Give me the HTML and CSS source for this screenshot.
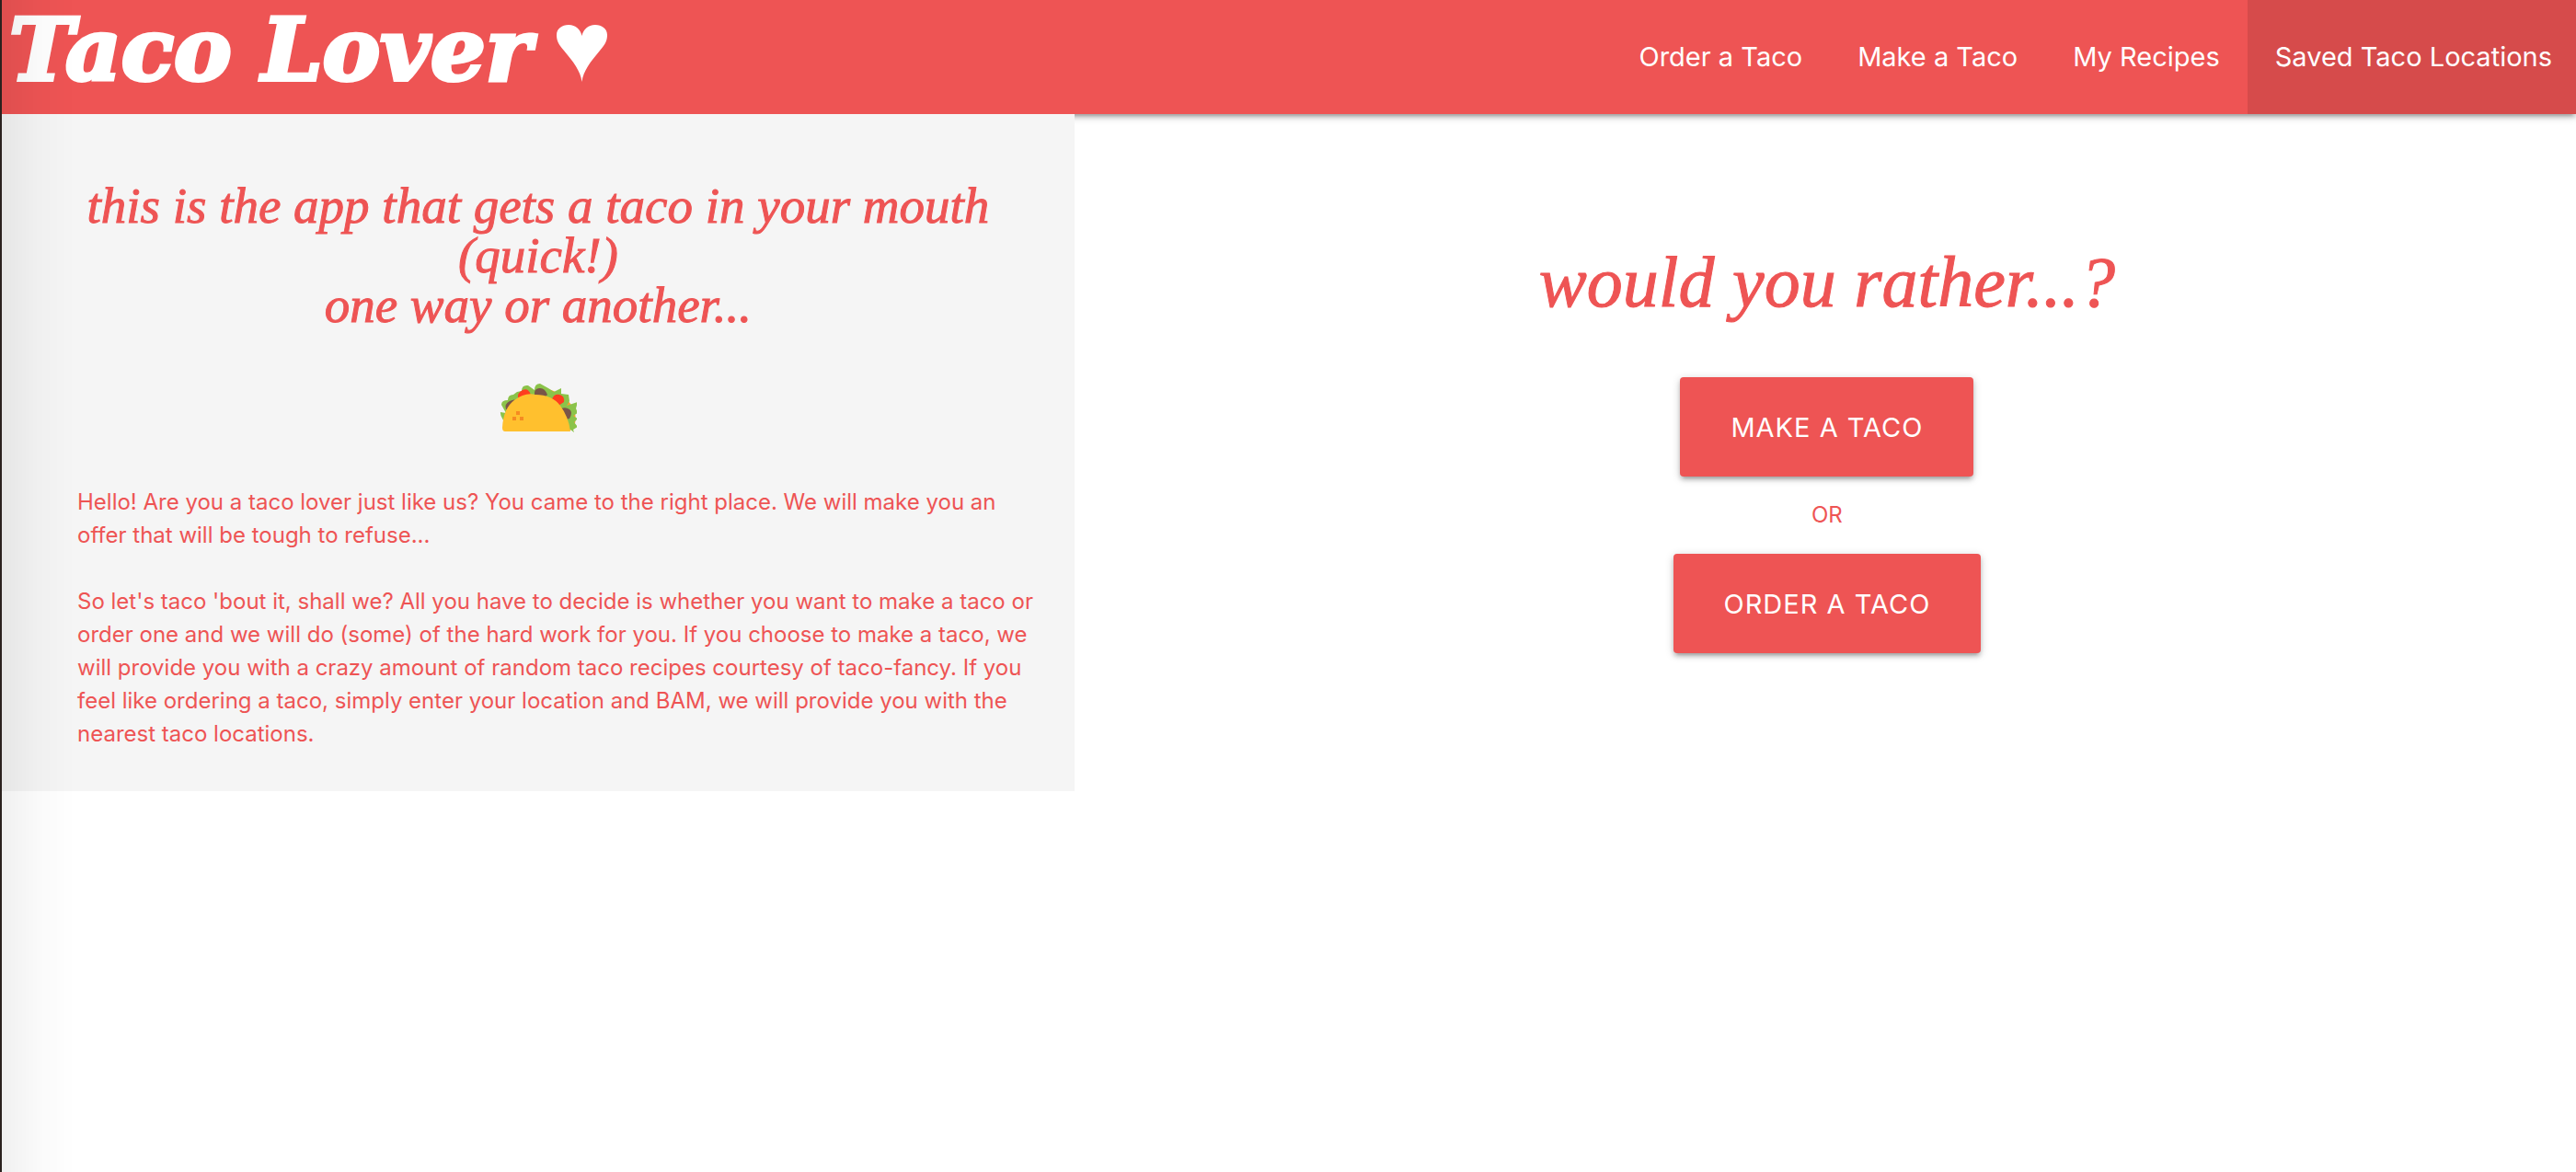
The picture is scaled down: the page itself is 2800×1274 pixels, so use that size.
FILE: index.html
```html
<!DOCTYPE html>
<html lang="en">
<head>
<meta charset="utf-8">
<title>Taco Lover</title>
<link rel="stylesheet" href="styles.css">
</head>
<body>
<header class="nav">
  <a class="brand" href="#">Taco Lover
    <svg class="heart" viewBox="0 0 55 62" role="img" aria-label="heart"><path d="M27.500 62C26 50 18 40 8 28 2 21 0 17 0 11 0 4 6 0 13 0 21 0 26 5 27.500 12 29 5 34 0 42 0 49 0 55 4 55 11 55 17 53 21 47 28 37 40 29 50 27.500 62Z"/></svg>
  </a>
  <nav class="links">
    <a href="#">Order a Taco</a>
    <a href="#">Make a Taco</a>
    <a href="#">My Recipes</a>
    <a class="active" href="#">Saved Taco Locations</a>
  </nav>
</header>
<main class="page">
  <section class="intro">
    <h1 class="tagline">this is the app that gets a taco in your mouth (quick!)<br>one way or another...</h1>
    <svg class="taco" viewBox="0 0 84 54" role="img" aria-label="taco">
      <path fill="#f9a02e" d="M50 5Q76 12 82 32Q85 48 74 52H60Z"/>
      <path fill="#8bc34a" d="M1 31l6 1-5-9q0-5 7-5 0-6 6-6l4-3 5-1q0-7 7-6l7 5q0-7 6-7l9 5 6 4 8-4 0 6 8 1 1 7-3 5 12-4-2 7 2 5-5 3 5 3-4 4 4 5-5 3 1 3-4-3L12 48Q0 38 1 31Z"/>
      <path fill="#795548" d="M7 28q-2-6 4-9t7 0l-8 9zM38 12q-1-6 5-7t9 7l-3 3zM67 27q5-2 9 1t0 10l-4 1z"/>
      <path fill="#ff3d1f" d="M20 16q-1-6 5-9t9 5L24 17zM57 17q2-6 8-5t5 8l-6 4z"/>
      <path fill="#ffc02e" d="M3 48Q4 27 16 18T39 12Q57 12 66 24T77 52H6Q3 52 3 48Z"/>
      <path fill="#f68b21" d="M18 30h4v4h-4zM14 36h4v4h-4zM22 36h4v4h-4z"/>
    </svg>
    <p class="copy">Hello! Are you a taco lover just like us? You came to the right place. We will make you an offer that will be tough to refuse...</p>
    <p class="copy">So let's taco 'bout it, shall we? All you have to decide is whether you want to make a taco or order one and we will do (some) of the hard work for you. If you choose to make a taco, we will provide you with a crazy amount of random taco recipes courtesy of taco-fancy. If you feel like ordering a taco, simply enter your location and BAM, we will provide you with the nearest taco locations.</p>
  </section>
  <section class="choice">
    <h2 class="question">would you rather...?</h2>
    <button class="btn" type="button">MAKE A TACO</button>
    <p class="or">OR</p>
    <button class="btn" type="button">ORDER A TACO</button>
  </section>
</main>
</body>
</html>
```
FILE: styles.css
```css
* { box-sizing: border-box; }

body {
  margin: 0;
  min-height: 100vh;
  border-left: 2px solid #2b211e;
  background: #fff;
  color: #ee5454;
  font-family: Inter, "Liberation Sans", sans-serif;
  font-size: 24px;
  line-height: 36px;
}

/* soft shade along the left window edge */
body::after {
  content: "";
  position: fixed;
  inset: 0 auto 0 2px;
  width: 80px;
  background: linear-gradient(to right, rgba(0, 0, 0, .06), rgba(0, 0, 0, .02) 50%, transparent);
  pointer-events: none;
}

.nav {
  display: flex;
  justify-content: space-between;
  height: 124px;
  background: #ee5454;
  box-shadow: 0 4px 4px rgba(0, 0, 0, .14), 0 6px 2px -4px rgba(0, 0, 0, .12), 0 2px 10px rgba(0, 0, 0, .2);
}

.nav a { color: #fff; text-decoration: none; }

.brand {
  display: flex;
  gap: 28px;
  padding-left: 8px;
  font: italic bold 94px/108px "DejaVu Serif", serif;
  -webkit-text-stroke: 4px #fff;
  white-space: nowrap;
}

.heart { width: 55px; height: 62px; margin-top: 27px; fill: #fff; stroke: none; }

.links { display: flex; }

.links a {
  padding: 0 30px;
  font-size: 29px;
  line-height: 124px;
  white-space: nowrap;
}

.links .active { padding-right: 26px; background: #d64b4b; }

.page { display: grid; grid-template-columns: 5fr 7fr; align-items: start; }

.intro {
  position: relative;
  padding: 73px 40px 44px;
  background: #f5f5f5;
}

.tagline, .question {
  margin: 0;
  font-family: "Liberation Serif", serif;
  font-style: italic;
  font-weight: 400;
  text-align: center;
  -webkit-text-stroke: 1px #ee5454;
}

.tagline { font-size: 55px; line-height: 54px; }

.taco { display: block; width: 84px; height: 54px; margin: 58px auto 57px; }

.copy { margin: 0 0 0 42px; }
.copy + .copy { margin-top: 36px; }

.choice {
  display: flex;
  flex-direction: column;
  align-items: center;
  padding: 144px 0 0 4px;
}

.question { margin-bottom: 64px; font-size: 78px; line-height: 78px; }

.btn {
  height: 108px;
  padding: 0 55px;
  border: 0;
  border-radius: 4px;
  background: #ee5454;
  color: #fff;
  font: 29px Inter, sans-serif;
  letter-spacing: 1px;
  box-shadow: 0 4px 4px rgba(0, 0, 0, .14), 0 6px 2px -4px rgba(0, 0, 0, .12), 0 2px 10px rgba(0, 0, 0, .2);
}

.or { margin: 24px 0; }
```
